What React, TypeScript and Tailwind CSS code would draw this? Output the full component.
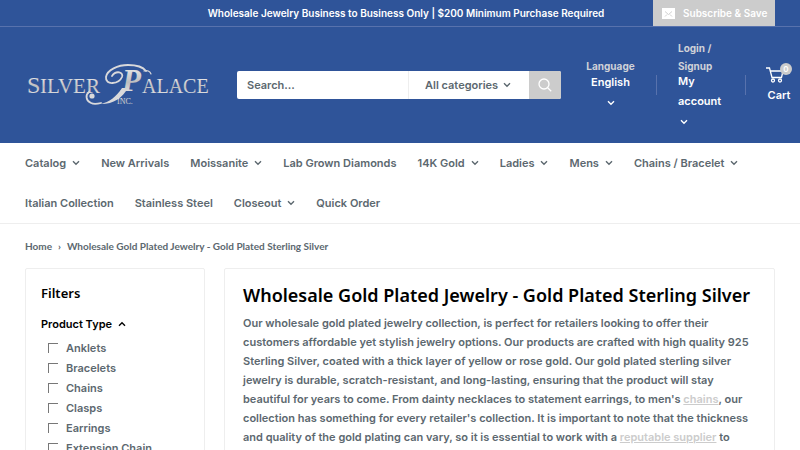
import type { ReactNode } from 'react';

type NavItem = { label: string; menu?: boolean };

const navItems: NavItem[] = [
  { label: 'Catalog', menu: true },
  { label: 'New Arrivals' },
  { label: 'Moissanite', menu: true },
  { label: 'Lab Grown Diamonds' },
  { label: '14K Gold', menu: true },
  { label: 'Ladies', menu: true },
  { label: 'Mens', menu: true },
  { label: 'Chains / Bracelet', menu: true },
  { label: 'Italian Collection' },
  { label: 'Stainless Steel' },
  { label: 'Closeout', menu: true },
  { label: 'Quick Order' },
];

const productTypes = ['Anklets', 'Bracelets', 'Chains', 'Clasps', 'Earrings', 'Extension Chain'];

function Chevron({ className = '' }: { className?: string }) {
  return (
    <svg
      viewBox="0 0 8 6"
      className={`w-2 h-1.5 shrink-0 ${className}`}
      fill="none"
      stroke="currentColor"
      strokeWidth="1.4"
      aria-hidden="true"
    >
      <path d="M1 1.3 4 4.3 7 1.3" />
    </svg>
  );
}

function Logo() {
  return (
    <svg viewBox="0 0 186 46" className="w-[186px] h-[46px]" role="img" aria-label="Silver Palace Inc.">
      <defs>
        <linearGradient id="silver" x1="0" y1="0" x2="0" y2="1">
          <stop offset="0" stopColor="#f6f6f6" />
          <stop offset="0.55" stopColor="#bdbdbf" />
          <stop offset="1" stopColor="#f2f2f2" />
        </linearGradient>
      </defs>
      {/* swashes above and below the initial */}
      <g fill="none" stroke="#d9d9db" strokeLinecap="round">
        <path strokeWidth="1.8" d="M87 14c4-6 12-4 10 1-3 7-17 9-16 0C82 8 93 3 103 3c9 0 15 2 18 6" />
        <path strokeWidth="1.2" d="M119 9c3-1 6 0 7 3" />
        <path strokeWidth="1.8" d="M76 41c-4 1-8 1-10 0-5-2-6-8-2-11" />
      </g>
      <path fill="#d9d9db" d="M97 26h6c-6 10-14 16-27 16 8-2 15-7 21-16z" />
      <circle cx="67" cy="34" r="2.6" fill="#d9d9db" />
      <g fill="url(#silver)" fontFamily="'Liberation Serif', serif" fontWeight="400">
        <text x="2" y="31" fontSize="24">S</text>
        <text x="15" y="31" fontSize="21">ILVER</text>
        <text x="97" y="29" fontSize="31" fontStyle="italic" fontWeight="700">P</text>
        <text x="117" y="31" fontSize="20">ALACE</text>
        <text x="92" y="42" fontSize="8">INC.</text>
      </g>
    </svg>
  );
}

function HeaderDivider() {
  return <span className="w-px h-5 bg-[#5872ad]" />;
}

function FilterOption({ children }: { children: ReactNode }) {
  return (
    <li>
      <label className="flex items-center gap-2 h-5 pl-[7px]">
        <input
          type="checkbox"
          className="appearance-none w-2.5 h-2.5 border-t border-l border-[#777777] bg-white"
        />
        {children}
      </label>
    </li>
  );
}

export default function App() {
  return (
    <div className="min-h-screen bg-white font-['Inter',sans-serif] text-[11px] font-semibold text-[#5c686f]">
      <header className="bg-[#2f5499] text-white">
        <div className="border-b border-[#5872ad]">
          <div className="flex items-stretch h-[26px] px-[25px]">
            <p className="flex-1 flex items-center justify-center pl-[134px] text-[10px]">
              Wholesale Jewelry Business to Business Only | $200 Minimum Purchase Required
            </p>
            <button type="button" className="flex items-center gap-2 w-[122px] pl-[9px] bg-[#cccccc] text-[10px]">
              <svg viewBox="0 0 13 11" className="w-[13px] h-[11px]" aria-hidden="true">
                <rect width="13" height="11" fill="#fff" />
                <path d="M3 3.5 6.5 6.5 10 3.5M3 8.5 5 6.5M10 8.5 8 6.5" fill="none" stroke="#ccc" strokeWidth="0.9" />
              </svg>
              Subscribe &amp; Save
            </button>
          </div>
        </div>

        <div className="flex items-center h-[116px] pl-[25px] pr-2">
          <a href="#home" className="shrink-0 mr-[26px]">
            <Logo />
          </a>
          <form className="flex flex-1 h-7 rounded-xs overflow-hidden bg-white text-[#5c686f]">
            <input
              type="text"
              aria-label="Search"
              placeholder="Search..."
              className="flex-1 min-w-0 pl-2.5 placeholder:text-[#5c686f] outline-none"
            />
            <div className="relative flex w-[121px] border-l border-[#eeeeee]">
              <select aria-label="Category" className="appearance-none w-full pl-4 bg-transparent">
                <option>All categories</option>
              </select>
              <Chevron className="absolute right-[18px] top-[11px] pointer-events-none" />
            </div>
            <button type="submit" aria-label="Search" className="w-8 flex items-center justify-center bg-[#cccccc]">
              <svg viewBox="0 0 14 14" className="w-3.5 h-3.5" fill="none" stroke="#fff" strokeWidth="1.3">
                <circle cx="6" cy="6" r="5" />
                <path d="m9.7 9.7 3.5 3.5" />
              </svg>
            </button>
          </form>
          <div className="flex items-center shrink-0">
            <button type="button" className="flex flex-col items-center w-[95px] pl-1 pb-1">
              <span className="text-[10px] leading-3 font-bold text-[#cfd2d8]">Language</span>
              <span className="leading-5">English</span>
              <Chevron className="mt-2" />
            </button>
            <HeaderDivider />
            <button type="button" className="flex flex-col items-start w-[88px] pl-[21px] pb-1.5 text-left">
              <span className="text-[10px] leading-[18px] font-bold text-[#cfd2d8]">
                Login /<br />
                Signup
              </span>
              <span className="-mt-1 leading-5">
                My
                <br />
                account
              </span>
              <Chevron className="mt-2 ml-0.5" />
            </button>
            <HeaderDivider />
            <a href="#cart" className="relative flex flex-col items-center gap-0.5 pt-0.5 ml-5">
              <svg
                viewBox="0 0 18 16"
                className="w-[18px] h-4 mr-2"
                fill="none"
                stroke="#fff"
                strokeWidth="1.3"
                aria-hidden="true"
              >
                <path d="M0 1h3.5l2.5 9.5h9.5L17 4H4.5" />
                <circle cx="7" cy="13.5" r="1.5" />
                <circle cx="14" cy="13.5" r="1.5" />
              </svg>
              <span className="absolute -top-0.5 right-0 w-3 h-3 rounded-full bg-[#cccccc] text-[8px] leading-3 text-center">
                0
              </span>
              <span className="leading-5">Cart</span>
            </a>
          </div>
        </div>
      </header>

      <nav className="border-b border-[#eeeeee] px-[25px]">
        <ul className="flex flex-wrap gap-x-[21px]">
          {navItems.map((item) => (
            <li key={item.label}>
              <a href="#collection" className="flex items-center gap-1.5 h-10">
                {item.label}
                {item.menu && <Chevron />}
              </a>
            </li>
          ))}
        </ul>
      </nav>

      <main className="px-[25px]">
        <nav
          aria-label="Breadcrumb"
          className="flex items-center gap-1.5 h-11 font-['Lato',sans-serif] text-[10px] font-bold"
        >
          <a href="#home">Home</a>
          <span>›</span>
          <span>Wholesale Gold Plated Jewelry - Gold Plated Sterling Silver</span>
        </nav>

        <div className="flex items-stretch gap-[19px]">
          <aside className="w-[180px] shrink-0 border border-[#eeeeee] rounded-xs px-[15px] pt-3 pb-4">
            <h2 className="font-['Noto_Sans',sans-serif] text-[13px] leading-6 font-semibold text-black">Filters</h2>
            <button type="button" className="flex items-center gap-1.5 mt-[9px] h-5 text-black">
              Product Type
              <Chevron className="rotate-180" />
            </button>
            <ul className="mt-1">
              {productTypes.map((type) => (
                <FilterOption key={type}>{type}</FilterOption>
              ))}
            </ul>
          </aside>

          <section className="flex-1 min-w-0 border border-[#eeeeee] rounded-xs px-[18px] py-3">
            <h1 className="font-['Noto_Sans',sans-serif] text-[18px] leading-7 font-semibold text-black whitespace-nowrap">
              Wholesale Gold Plated Jewelry - Gold Plated Sterling Silver
            </h1>
            <p className="mt-[5px] leading-[19px] whitespace-nowrap">
              Our wholesale gold plated jewelry collection, is perfect for retailers looking to offer their
              <br />
              customers affordable yet stylish jewelry options. Our products are crafted with high quality 925
              <br />
              Sterling Silver, coated with a thick layer of yellow or rose gold. Our gold plated sterling silver
              <br />
              jewelry is durable, scratch-resistant, and long-lasting, ensuring that the product will stay
              <br />
              beautiful for years to come. From dainty necklaces to statement earrings, to men's{' '}
              <a href="#chains" className="text-[#cccccc] underline">chains</a>, our
              <br />
              collection has something for every retailer's collection. It is important to note that the thickness
              <br />
              and quality of the gold plating can vary, so it is essential to work with a{' '}
              <a href="#supplier" className="text-[#cccccc] underline">reputable supplier</a> to
            </p>
          </section>
        </div>
      </main>
    </div>
  );
}
